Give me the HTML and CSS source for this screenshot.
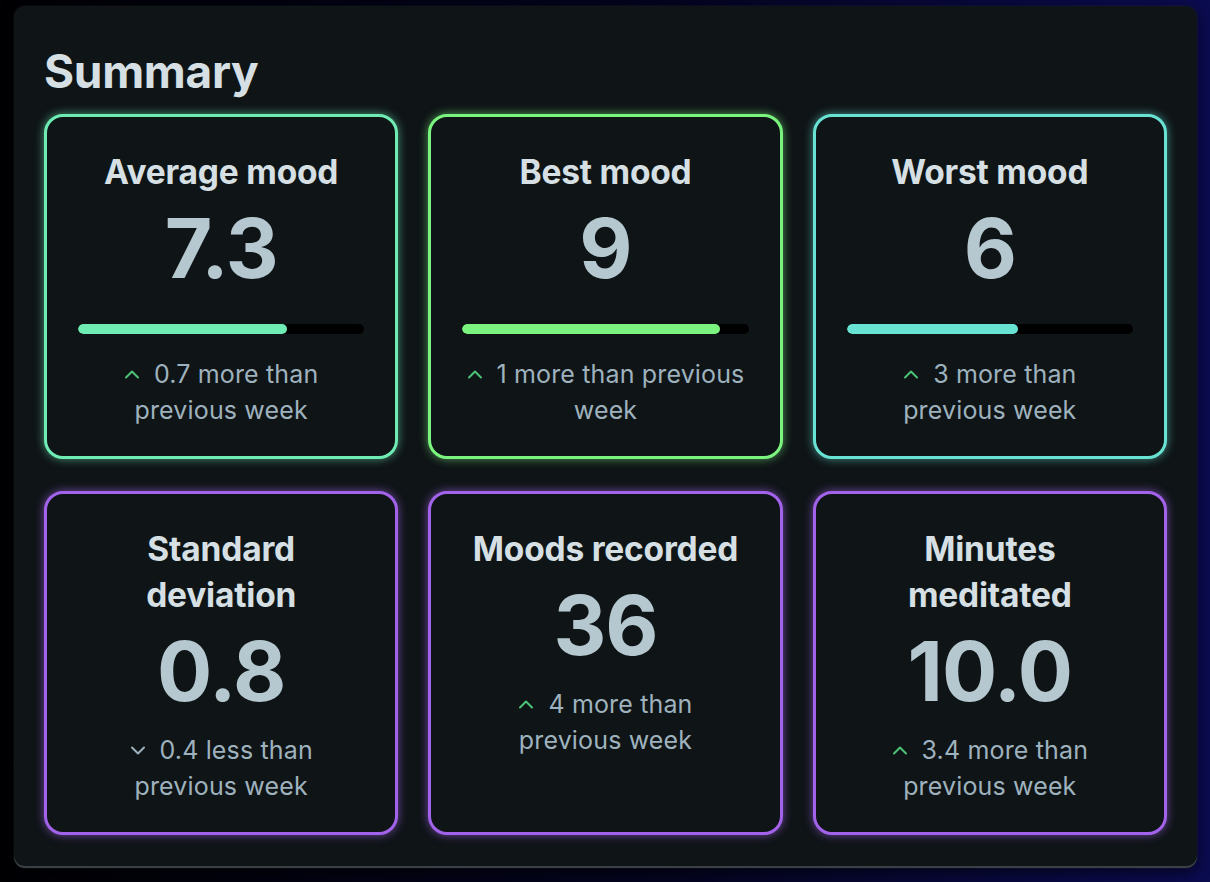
FILE: index.html
```html
<!DOCTYPE html>
<html lang="en">
<head>
<meta charset="utf-8">
<title>Summary</title>
<link rel="stylesheet" href="styles.css">
</head>
<body>
<section class="panel">
  <h1 class="panel-title">Summary</h1>
  <div class="grid">
    <article class="card card-mint">
      <h2 class="card-title">Average mood</h2>
      <div class="card-value">7.3</div>
      <div class="bar"><div class="bar-fill" style="width:73%"></div></div>
      <p class="delta"><svg class="chev up" viewBox="0 0 16 10"><polyline points="2,8.5 8,2.5 14,8.5"/></svg>0.7 more than previous week</p>
    </article>
    <article class="card card-green">
      <h2 class="card-title">Best mood</h2>
      <div class="card-value">9</div>
      <div class="bar"><div class="bar-fill" style="width:90%"></div></div>
      <p class="delta"><svg class="chev up" viewBox="0 0 16 10"><polyline points="2,8.5 8,2.5 14,8.5"/></svg>1 more than previous week</p>
    </article>
    <article class="card card-teal">
      <h2 class="card-title">Worst mood</h2>
      <div class="card-value">6</div>
      <div class="bar"><div class="bar-fill" style="width:60%"></div></div>
      <p class="delta"><svg class="chev up" viewBox="0 0 16 10"><polyline points="2,8.5 8,2.5 14,8.5"/></svg>3 more than previous week</p>
    </article>
    <article class="card card-purple">
      <h2 class="card-title">Standard deviation</h2>
      <div class="card-value">0.8</div>
      <p class="delta"><svg class="chev down" viewBox="0 0 16 10"><polyline points="2,2.5 8,8.5 14,2.5"/></svg>0.4 less than previous week</p>
    </article>
    <article class="card card-purple">
      <h2 class="card-title">Moods recorded</h2>
      <div class="card-value">36</div>
      <p class="delta"><svg class="chev up" viewBox="0 0 16 10"><polyline points="2,8.5 8,2.5 14,8.5"/></svg>4 more than previous week</p>
    </article>
    <article class="card card-purple">
      <h2 class="card-title">Minutes meditated</h2>
      <div class="card-value">10.0</div>
      <p class="delta"><svg class="chev up" viewBox="0 0 16 10"><polyline points="2,8.5 8,2.5 14,8.5"/></svg>3.4 more than previous week</p>
    </article>
  </div>
</section>
</body>
</html>
```

FILE: styles.css
```css
* { box-sizing: border-box; }

html, body { height: 100%; }

body {
  margin: 0;
  padding: 6px 13px 0 14px;
  background: linear-gradient(90deg, #010104 0%, #040420 55%, #0b0b50 100%);
  font-family: Inter, "Noto Sans", sans-serif;
  color: #d6e0e4;
}

.panel {
  background: #0f1417;
  border-radius: 11px;
  padding: 38px 30px 33px;
  box-shadow:
    inset 0 -2px 0 #3a4045,
    0 0 0 1px rgba(255, 255, 255, 0.03),
    0 4px 14px rgba(0, 0, 0, 0.6);
}

.panel-title {
  margin: 0 0 16px;
  font-size: 46px;
  line-height: 54px;
  font-weight: 700;
  letter-spacing: -0.3px;
  color: #d6e0e4;
}

.grid {
  display: grid;
  grid-template-columns: repeat(3, 1fr);
  gap: 32px 30px;
}

.card {
  border: 3px solid;
  border-radius: 19px;
  padding: 32px 31px 28px;
  text-align: center;
  background: #0f1417;
}

.card-mint { border-color: #6eecb4; box-shadow: 0 0 10px rgba(110, 236, 180, 0.6); }
.card-green { border-color: #7af47f; box-shadow: 0 0 10px rgba(122, 244, 127, 0.6); }
.card-teal { border-color: #68e3d3; box-shadow: 0 0 10px rgba(104, 227, 211, 0.6); }
.card-purple { border-color: #a263ea; box-shadow: 0 0 10px rgba(162, 99, 234, 0.65); }

.card-mint .bar-fill { background: #6eecb4; }
.card-green .bar-fill { background: #7af47f; }
.card-teal .bar-fill { background: #68e3d3; }

.card-title {
  margin: 0 0 12px;
  font-size: 33.5px;
  line-height: 46px;
  font-weight: 700;
  letter-spacing: -0.2px;
  color: #d6e0e4;
}

.card-value {
  font-size: 82px;
  line-height: 84px;
  font-weight: 700;
  letter-spacing: -1px;
  color: #b5c7cf;
  margin-bottom: 18px;
}

.bar {
  height: 10px;
  border-radius: 5px;
  background: #000;
  margin: 33px 0 22px;
  overflow: hidden;
}

.bar-fill {
  height: 100%;
  border-radius: 5px;
}

.delta {
  margin: 0 3px;
  font-size: 25px;
  line-height: 36px;
  letter-spacing: 0.15px;
  color: #9eb2be;
}

.chev {
  width: 16px;
  height: 10px;
  margin-right: 14px;
  vertical-align: 4px;
  fill: none;
  stroke-width: 2;
  stroke-linecap: round;
  stroke-linejoin: round;
}

.chev.up { stroke: #4cc477; }
.chev.down { stroke: #9eb2be; }
```
